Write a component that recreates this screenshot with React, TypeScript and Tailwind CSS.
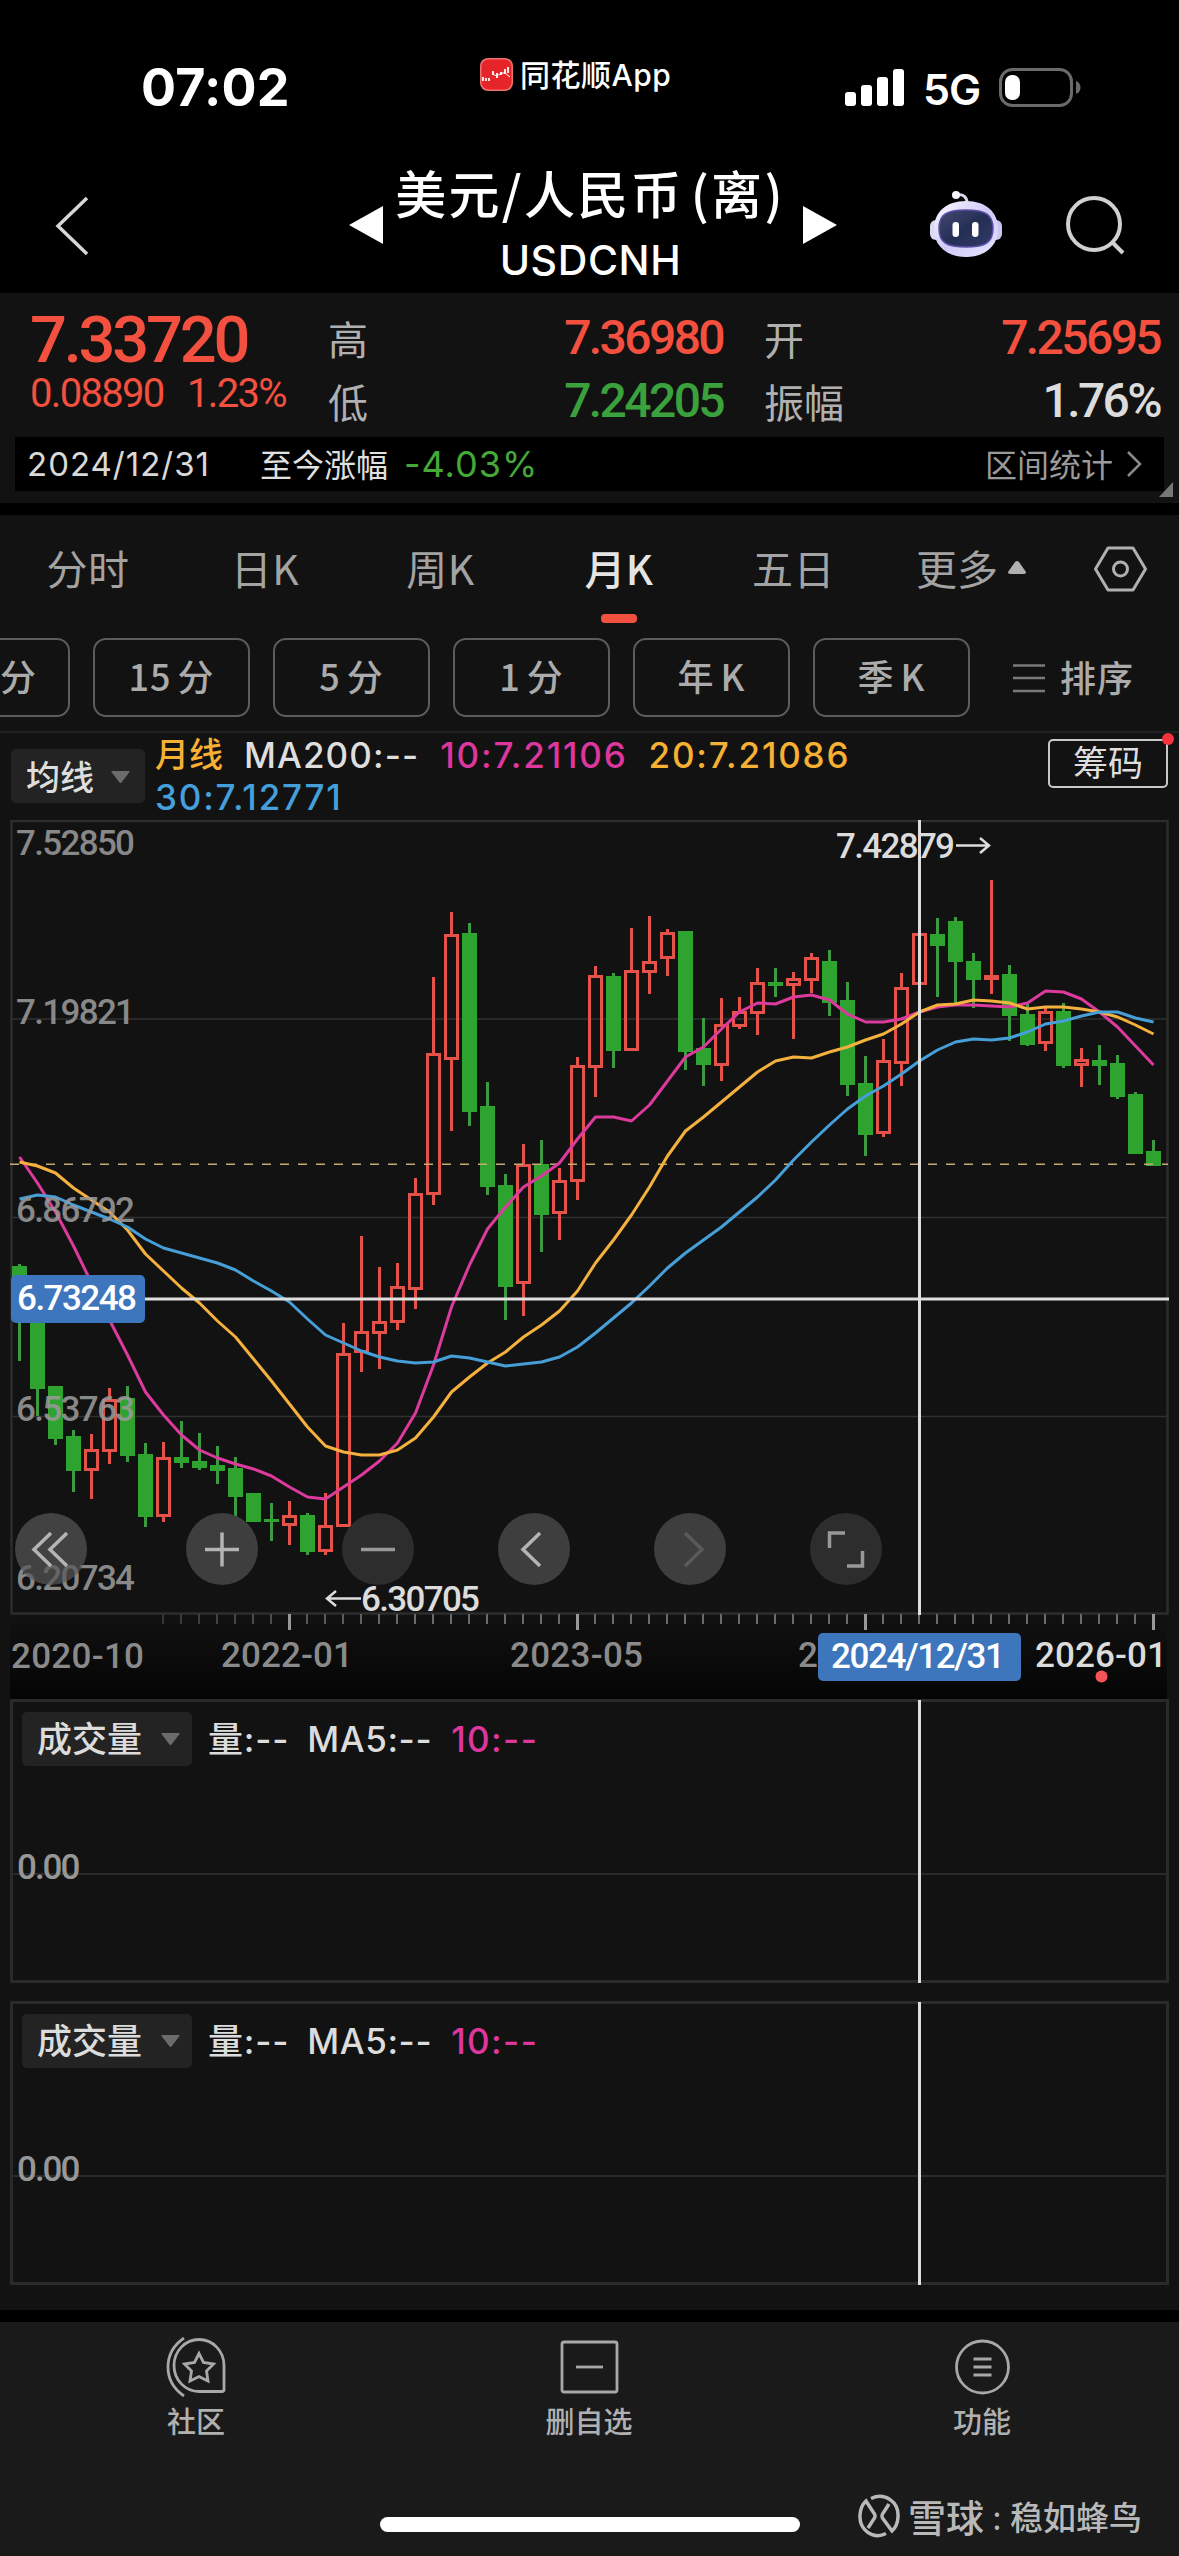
import React from 'react';
import { clsx } from 'clsx';

// --- Chart data ---

interface Candle {
    up: boolean;
    high: number;
    top: number;
    bottom: number;
    low: number;
}

// direction, high, body top, body bottom, low (in chart pixels)
const rawCandles: [number, number, number, number, number][] = [
    [0, 1264, 1266, 1300, 1361], [0, 1300, 1300, 1389, 1416], [0, 1386, 1386, 1439, 1445], [0, 1430, 1436, 1471, 1492],
    [1, 1434, 1449, 1471, 1499], [1, 1388, 1399, 1452, 1464], [0, 1386, 1398, 1456, 1462], [0, 1443, 1454, 1517, 1527],
    [1, 1442, 1457, 1517, 1522], [0, 1421, 1457, 1463, 1468], [0, 1433, 1461, 1468, 1470], [0, 1446, 1465, 1471, 1484],
    [0, 1457, 1468, 1497, 1518], [0, 1493, 1493, 1522, 1522], [0, 1503, 1519, 1522, 1541], [1, 1501, 1515, 1526, 1545],
    [0, 1513, 1515, 1552, 1555], [1, 1493, 1525, 1552, 1555], [1, 1323, 1353, 1527, 1527], [1, 1236, 1331, 1353, 1372],
    [1, 1267, 1321, 1334, 1369], [1, 1263, 1286, 1323, 1330], [1, 1178, 1193, 1290, 1309], [1, 977, 1053, 1195, 1205],
    [1, 912, 934, 1060, 1131], [0, 923, 933, 1112, 1126], [0, 1082, 1106, 1187, 1195], [0, 1174, 1185, 1287, 1320],
    [1, 1144, 1164, 1284, 1316], [0, 1140, 1164, 1215, 1252], [1, 1168, 1180, 1214, 1240], [1, 1057, 1065, 1182, 1200],
    [1, 966, 975, 1068, 1097], [0, 973, 976, 1051, 1068], [1, 928, 970, 1051, 1051], [1, 916, 961, 973, 994],
    [1, 929, 932, 959, 976], [0, 931, 931, 1052, 1070], [0, 1018, 1048, 1065, 1086], [1, 998, 1024, 1066, 1081],
    [1, 997, 1011, 1027, 1029], [1, 968, 982, 1014, 1035], [0, 968, 982, 986, 997], [1, 972, 978, 986, 1039],
    [1, 953, 957, 981, 993], [0, 950, 961, 1003, 1016], [0, 982, 1000, 1085, 1096], [0, 1056, 1083, 1135, 1156],
    [1, 1039, 1060, 1134, 1137], [1, 973, 987, 1064, 1086], [1, 915, 933, 985, 992], [0, 918, 934, 946, 997],
    [0, 917, 921, 962, 1004], [0, 953, 961, 980, 1008], [1, 880, 975, 980, 994], [0, 965, 974, 1016, 1041],
    [0, 1003, 1014, 1045, 1046], [1, 1008, 1011, 1044, 1051], [0, 1003, 1011, 1066, 1068], [1, 1048, 1059, 1066, 1087],
    [0, 1045, 1060, 1066, 1085], [0, 1055, 1063, 1097, 1099], [0, 1092, 1094, 1154, 1154], [0, 1140, 1151, 1166, 1166],
];

const candles: Candle[] = rawCandles.map(([dir, high, top, bottom, low]) => ({ up: dir === 1, high, top, bottom, low }));

const ma10 = [
    1157, 1183, 1212, 1246, 1283, 1320, 1355, 1392, 1415, 1435, 1450, 1458, 1464, 1469, 1476, 1487, 1497, 1499, 1487, 1475, 1461, 1443,
    1413, 1365, 1307, 1265, 1229, 1207, 1187, 1176, 1163, 1139, 1117, 1117, 1121, 1105, 1081, 1057, 1047, 1029, 1012, 1003, 1004, 997,
    995, 1000, 1014, 1022, 1022, 1019, 1012, 1007, 1005, 1005, 1006, 1007, 1003, 991, 992, 999, 1012, 1027, 1046, 1065,
];
const ma20 = [
    1162, 1166, 1173, 1188, 1200, 1212, 1230, 1254, 1271, 1288, 1303, 1321, 1337, 1359, 1381, 1404, 1427, 1446, 1452, 1455, 1455, 1450,
    1438, 1417, 1392, 1377, 1363, 1352, 1337, 1325, 1311, 1291, 1263, 1240, 1215, 1187, 1156, 1131, 1117, 1102, 1087, 1072, 1061, 1057,
    1058, 1052, 1047, 1040, 1034, 1024, 1012, 1005, 1004, 1000, 1001, 1003, 1009, 1007, 1007, 1009, 1012, 1017, 1025, 1034,
];
const ma30 = [
    1199, 1195, 1197, 1205, 1212, 1219, 1227, 1239, 1248, 1253, 1258, 1263, 1270, 1281, 1291, 1302, 1319, 1335, 1343, 1351, 1357, 1361,
    1363, 1362, 1356, 1358, 1362, 1366, 1364, 1362, 1357, 1347, 1333, 1318, 1303, 1286, 1268, 1253, 1240, 1227, 1212, 1197, 1180, 1160,
    1142, 1125, 1109, 1096, 1086, 1074, 1061, 1050, 1042, 1039, 1040, 1038, 1032, 1024, 1021, 1016, 1012, 1012, 1018, 1022,
];

const cx = (i: number) => 19.5 + i * 18;
const toPoints = (ys: number[]) => ys.map((y, i) => `${cx(i)},${y}`).join(' ');

// --- Icons ---

const Caret = ({ className }: { className?: string }) => (
    <svg className={clsx('h-3 w-[19px] fill-[#6b6b6b]', className)} viewBox="0 0 19 12">
        <path d="M1 0h17q1 0 .5 1L10.5 11.4q-1 1-2 0L.5 1Q0 0 1 0z" />
    </svg>
);

const AppLogo = () => (
    <svg className="h-[33px] w-[33px]" viewBox="0 0 33 33">
        <rect width="33" height="33" rx="8" fill="#f0706e" />
        <rect x="1.5" y="1.5" width="30" height="30" rx="7" fill="#e5252a" />
        <path d="M3 19v4M6 20v3M9 20v3M13 13v4M17 15v5M21 14v3M25 11v5M28 9v6" stroke="#fff" strokeWidth="1.8" />
        <path d="M12 16l5 2 4-3 4 0 5 4" fill="none" stroke="#fff" strokeWidth="1" />
    </svg>
);

const Robot = () => (
    <svg className="h-[70px] w-[74px]" viewBox="0 0 74 70">
        <defs>
            <linearGradient id="shell" x1="0" y1="0" x2="1" y2="1">
                <stop offset="0" stopColor="#fafaff" />
                <stop offset="0.5" stopColor="#d2c9f8" />
                <stop offset="1" stopColor="#e4e6ff" />
            </linearGradient>
            <linearGradient id="visor" x1="0" y1="0" x2="1" y2="1">
                <stop offset="0" stopColor="#444a72" />
                <stop offset="0.5" stopColor="#252f55" />
                <stop offset="1" stopColor="#303a66" />
            </linearGradient>
        </defs>
        <path d="M38 13c0-6-4-9-9-8" fill="none" stroke="#d5d6ea" strokeWidth="3" />
        <circle cx="27" cy="5" r="4" fill="#f4f4ff" />
        <rect x="1" y="30" width="12" height="20" rx="6" fill="#d9daf4" />
        <rect x="61" y="30" width="12" height="20" rx="6" fill="#c6c8ee" />
        <path d="M37 11c20 0 32 11 32 28S56 67 37 67 5 56 5 39s12-28 32-28z" fill="url(#shell)" />
        <path d="M37 20c20 0 27 5 27 18.500S57 57 37 57s-27-5-27-18.500S17 20 37 20z" fill="url(#visor)" stroke="#5a4fa6" strokeWidth="1.5" />
        <rect x="23.500" y="32" width="6.500" height="15" rx="3.200" fill="#fff" />
        <rect x="43" y="32" width="6.500" height="15" rx="3.200" fill="#fff" />
    </svg>
);

// --- Header ---

const StatusBar = () => (
    <div className="flex h-[150px] items-start font-['Inter','Noto_Sans_CJK_SC',sans-serif] text-white">
        <div className="w-[480px] pt-[62px] pl-[141px] text-[52px] leading-[52px] font-bold tracking-[0.2px]">07:02</div>
        <div className="flex w-[364px] items-center pt-[56px]">
            <AppLogo />
            <span className="mt-[1px] ml-[7px] text-[30px] leading-[36px] font-medium tracking-[0.5px]">同花顺App</span>
        </div>
        <svg className="mt-[69px] h-[38px] w-[60px] fill-white" viewBox="0 0 60 38">
            <rect x="1" y="23" width="11" height="14" rx="3" />
            <rect x="17" y="16" width="11" height="21" rx="3" />
            <rect x="33" y="8" width="11" height="29" rx="3" />
            <rect x="49" y="0" width="11" height="37" rx="3" />
        </svg>
        <span className="mt-[67px] ml-[19px] w-[58px] text-[43px] leading-[44px] font-semibold tracking-[-1px]">5G</span>
        <svg className="mt-[68px] ml-[18px] h-[40px] w-[84px]" viewBox="0 0 84 40">
            <rect x="1.5" y="1.5" width="71" height="36" rx="12" fill="none" stroke="#6a6a6a" strokeWidth="3" />
            <rect x="6" y="7" width="15" height="25" rx="7" fill="#fff" />
            <path d="M77 13c6 2 6 11 0 13z" fill="#6a6a6a" />
        </svg>
    </div>
);

const NavBar = () => (
    <div className="flex h-[143px] font-['Noto_Sans_CJK_SC',sans-serif] text-white">
        <svg className="mt-[46px] ml-[54px] h-[60px] w-[36px]" viewBox="0 0 36 60" fill="none" stroke="#d6d6d6" strokeWidth="3.5">
            <path d="M33 2L4 30l29 28" />
        </svg>
        <svg className="mt-[56px] ml-[259px] h-[38px] w-[34px] fill-white" viewBox="0 0 34 38">
            <path d="M0 19L34 0v38z" />
        </svg>
        <div className="flex w-[420px] flex-col items-center">
            <div className="mt-[12px] -ml-[6px] text-[51px] leading-[60px] font-medium whitespace-pre tracking-[2.3px]">
                美元/人民币 <span className="-ml-[7px]">(离)</span>
            </div>
            <div className="mt-[16px] -ml-[5px] font-['Inter',sans-serif] text-[41px] leading-[44px] font-medium tracking-[0.6px]">USDCNH</div>
        </div>
        <svg className="mt-[56px] h-[38px] w-[34px] fill-white" viewBox="0 0 34 38">
            <path d="M34 19L0 0v38z" />
        </svg>
        <div className="mt-[40px] ml-[92px]">
            <Robot />
        </div>
        <svg className="mt-[46px] ml-[62px] h-[60px] w-[62px]" viewBox="0 0 62 60" fill="none" stroke="#d0d0d0" strokeWidth="4">
            <circle cx="29" cy="28" r="26" />
            <path d="M47 46l11 11" />
        </svg>
    </div>
);

// --- Quote panel ---

const RED = 'text-[#f4503f]';
const GREEN = 'text-[#3ba13d]';

interface QuoteItemProps {
    label: string;
    value: string;
    color: string;
}

const QuoteItem: React.FC<QuoteItemProps> = ({ label, value, color }) => (
    <div className="flex h-[63px] items-center justify-between leading-[62px]">
        <span className="text-[40px] text-[#b0b0b0]">{label}</span>
        <span className={clsx("font-['Roboto',sans-serif] text-[48px] font-medium tracking-[-2.6px]", color)}>{value}</span>
    </div>
);

const QuotePanel = () => (
    <div className="h-[210px] bg-[#121212] font-['Noto_Sans_CJK_SC',sans-serif]">
        <div className="flex h-[144px] pt-[13px]">
            <div className={clsx("w-[328px] pl-[30px] font-['Roboto',sans-serif]", RED)}>
                <div className="pt-[1px] text-[65px] leading-[66px] font-medium tracking-[-3.2px]">7.33720</div>
                <div className="flex text-[40px] leading-[42px] tracking-[-1.7px] whitespace-pre">
                    <span className="w-[157px]">0.08890</span>
                    <span>1.23%</span>
                </div>
            </div>
            <div className="w-[395px]">
                <QuoteItem label="高" value="7.36980" color={RED} />
                <QuoteItem label="低" value="7.24205" color={GREEN} />
            </div>
            <div className="ml-[41px] w-[396px]">
                <QuoteItem label="开" value="7.25695" color={RED} />
                <QuoteItem label="振幅" value="1.76%" color="text-[#dcdcdc]" />
            </div>
        </div>
        <div className="relative ml-[15px] flex h-[54px] w-[1149px] items-center bg-black text-[32px] leading-[50px]">
            <span className="w-[245px] pl-[12px] font-['Inter',sans-serif] text-[33px] tracking-[1px] text-[#d8d8d8]">2024/12/31</span>
            <span className="-mt-[2px] text-[#e0e0e0]">至今涨幅</span>
            <span className="ml-[16px] flex-1 font-['Inter',sans-serif] text-[36px] tracking-[1px] text-[#45a838]">-4.03%</span>
            <span className="-mt-[2px] text-[#9a9a9a]">区间统计</span>
            <svg className="mr-[21px] ml-[13px] h-[28px] w-[17px]" viewBox="0 0 17 28" fill="none" stroke="#8a8a8a" strokeWidth="2.5">
                <path d="M2 2l12 12L2 26" />
            </svg>
            <svg className="absolute -right-[9px] -bottom-[6px] h-[15px] w-[14px] fill-[#777]" viewBox="0 0 14 15">
                <path d="M14 0v15H0z" />
            </svg>
        </div>
    </div>
);

// --- Period tabs ---

const tabs = [
    { label: '分时', width: 'w-[176px]' },
    { label: '日K', width: 'w-[178px]' },
    { label: '周K', width: 'w-[173px]' },
    { label: '月K', width: 'w-[184px]' },
    { label: '五日', width: 'w-[165px]' },
];

const PeriodTabs = () => (
    <div className="flex h-[122px] text-[41px] text-[#a3a3a3]">
        {tabs.map(({ label, width }) => (
            <div key={label} className={clsx('flex shrink-0 flex-col items-center pt-[22px]', width)}>
                <span className={clsx('leading-[60px] tracking-[0.5px]', label === '月K' ? 'font-medium text-[#e4e4e4]' : 'font-normal')}>{label}</span>
                {label === '月K' && <span className="mt-[17px] h-[9px] w-[36px] rounded-[4px] bg-[#f4503f]" />}
            </div>
        ))}
        <div className="ml-[40px] flex h-[104px] items-center leading-[60px]">
            更多
            <svg className="ml-[10px] h-[13px] w-[18px] fill-[#b0b0b0]" viewBox="0 0 18 13">
                <path d="M9 0q1 0 2 1l7 10q0 2-2 2H2q-2 0-2-2L7 1q1-1 2-1z" />
            </svg>
        </div>
        <svg className="mt-[31px] ml-[68px] h-[46px] w-[54px]" viewBox="0 0 54 46" fill="none" stroke="#b0b0b0" strokeWidth="3">
            <path d="M14 2h25l12.500 21L39 44H14L1.500 23z" strokeLinejoin="round" />
            <circle cx="26.500" cy="23" r="7" />
        </svg>
    </div>
);

const chips = ['15 分', '5 分', '1 分', '年 K', '季 K'];

const ChipRow = () => (
    <div className="flex h-[95px] items-start border-b-[2px] border-[#202020] text-[36px] text-[#ababab]">
        <div className="flex h-[79px] w-[70px] items-center rounded-r-[13px] border-y-2 border-r-2 border-[#5c5c5c] pb-[5px] font-medium">分</div>
        {chips.map((chip) => (
            <div
                key={chip}
                className="ml-[23px] flex h-[79px] w-[157px] items-center justify-center rounded-[13px] border-2 border-[#5c5c5c] pb-[5px] font-medium tracking-[1px] [word-spacing:-3px]"
            >
                {chip}
            </div>
        ))}
        <div className="ml-[43px] flex h-[79px] items-center">
            <svg className="h-[30px] w-[32px]" viewBox="0 0 32 30" stroke="#7a7a7a" strokeWidth="2.500">
                <path d="M0 2.500h32M0 15h32M0 28h32" />
            </svg>
            <span className="ml-[15px] pb-[4px] font-medium tracking-[1px]">排序</span>
        </div>
    </div>
);

// --- Main chart ---

const MaLegend = () => (
    <div className="flex h-[87px] items-start pl-[11px]">
        <button className="mt-[16px] flex h-[54px] w-[134px] items-center rounded-[5px] bg-[#232323] pb-[2px] pl-[15px] text-[34px] font-medium text-[#dedede]">
            均线
            <Caret className="mt-[3px] ml-[17px]" />
        </button>
        <div className="ml-[10px] flex w-[893px] flex-wrap gap-x-[21px] pt-[1px] font-['Inter','Noto_Sans_CJK_SC',sans-serif] text-[35px] leading-[42px] font-medium tracking-[1.8px]">
            <span className="text-[34px] tracking-normal text-[#f6b033]">月线</span>
            <span className="tracking-[1.1px] text-[#dedede]">MA200:--</span>
            <span className="text-[#dd379e]">10:7.21106</span>
            <span className="w-[300px] text-[#f6b033]">20:7.21086</span>
            <span className="text-[#459fdb]">30:7.12771</span>
        </div>
        <div className="relative mt-[6px] flex h-[49px] w-[120px] items-center justify-center rounded-[5px] border-2 border-[#c8c8c8] pb-[5px] text-[35px] text-[#dedede]">
            筹码
            <span className="absolute -top-[8px] -right-[8px] h-3 w-3 rounded-full bg-[#f5333c]" />
        </div>
    </div>
);

const CandleStick = ({ candle, index }: { candle: Candle; index: number }) => {
    const x = cx(index);
    const { up, high, top, bottom, low } = candle;
    if (up) {
        return (
            <g fill="none" stroke="#e4524a" strokeWidth="3">
                <path d={`M${x} ${high}V${top}M${x} ${bottom}V${low}`} />
                <rect x={x - 6} y={top + 1.5} width="12" height={bottom - top - 3} />
            </g>
        );
    }
    return (
        <g fill="#2fa32f">
            <rect x={x - 1.5} y={high} width="3" height={low - high} fill="#3c9a40" />
            <rect x={x - 7.5} y={top} width="15" height={bottom - top} />
        </g>
    );
};

const priceLabels = [
    { text: '7.52850', y: 855 },
    { text: '7.19821', y: 1023.5 },
    { text: '6.86792', y: 1222 },
    { text: '6.53763', y: 1421 },
    { text: '6.20734', y: 1589.5 },
];

const KLineChart = () => (
    <svg
        className="block h-[879px] w-[1179px] font-['Roboto',sans-serif] text-[35px] font-medium"
        viewBox="0 820 1179 879"
    >
        <defs>
            <linearGradient id="axis" x1="0" y1="0" x2="0" y2="1">
                <stop offset="0" stopColor="#121212" />
                <stop offset="1" stopColor="#040404" />
            </linearGradient>
            <linearGradient id="fade" gradientUnits="userSpaceOnUse" x1="150" y1="0" x2="400" y2="0">
                <stop offset="0" stopColor="#333" />
                <stop offset="1" stopColor="#6a6a6a" />
            </linearGradient>
        </defs>
        <rect x="10" y="1614" width="1157" height="86" fill="url(#axis)" />
        <path d="M12 1019H1167M12 1217.500H1167M12 1416.500H1167" stroke="#303030" strokeWidth="1.500" />
        <rect x="11.500" y="821" width="1156" height="792.500" fill="none" stroke="#2d2d2d" strokeWidth="2.500" />

        {candles.map((candle, i) => (
            <CandleStick key={i} candle={candle} index={i} />
        ))}
        <path d="M10 1164.300H1168" stroke="#c4a974" strokeWidth="1.500" strokeDasharray="9 9" />

        <g fill="none" strokeWidth="3" strokeLinejoin="round">
            <polyline points={toPoints(ma10)} stroke="#dc3a9c" />
            <polyline points={toPoints(ma20)} stroke="#f5b13d" />
            <polyline points={toPoints(ma30)} stroke="#479fd8" />
        </g>

        <g fill="#999" fillOpacity="0.88">
            {priceLabels.map(({ text, y }) => (
                <text key={text} x="16" y={y} textLength="119">{text}</text>
            ))}
        </g>

        {/* time scale */}
        {candles.map((_, i) => i >= 8 && (
            <rect key={i} x={cx(i) - 1.5} y="1614" width={i % 16 === 15 ? 3 : 2} height={i % 16 === 15 ? 16 : 10} fill={i % 16 === 15 ? '#999' : 'url(#fade)'} />
        ))}
        <g fill="#8a8a8a">
            <text x="11" y="1668" textLength="133">2020-10</text>
            <text x="221" y="1667" textLength="132">2022-01</text>
            <text x="510" y="1667" textLength="133">2023-05</text>
            <text x="798" y="1667">2</text>
        </g>
        <text x="1035" y="1667" textLength="132" fill="#dcdcdc">2026-01</text>
        <circle cx="1101.500" cy="1676.500" r="6" fill="#f5525a" />

        {/* high / low markers */}
        <g fill="#dcdcdc">
            <text x="836" y="858" textLength="119">7.42879</text>
            <text x="361" y="1611" textLength="119">6.30705</text>
        </g>
        <path d="M956 845.500h33m-9-7.500l9 7.500-9 7.500M361 1598.500h-34m9-7.500l-9 7.500 9 7.500" fill="none" stroke="#dcdcdc" strokeWidth="2.500" />

        {/* crosshair */}
        <path d="M145 1299H1169M919.500 820V1615" stroke="#dedede" strokeWidth="3" />
        <rect x="11" y="1275" width="134" height="48" rx="5" fill="#3e76bd" />
        <text x="17" y="1310" textLength="120" fill="#fff">6.73248</text>
        <rect x="818" y="1633" width="203" height="48" rx="5" fill="#3e76bd" />
        <text x="831" y="1668" textLength="174" fill="#fff">2024/12/31</text>
    </svg>
);

const ROUND = 'flex h-[72px] w-[72px] items-center justify-center rounded-full';

const ChartControls = () => (
    <div className="absolute top-[693px] left-[15px] flex">
        {[
            { key: 'fold', tone: 'bg-[#575757]/70', gap: 'mr-[99px]', line: '#b4b4b4', d: 'M36 20L19 36.5 36 53M52 20L35 36.5 52 53' },
            { key: 'in', tone: 'bg-[#3e3e3e]', gap: 'mr-[84px]', line: '#b4b4b4', d: 'M19 36.5H53M36 19.5V53.5' },
            { key: 'out', tone: 'bg-[#2d2d2d]', gap: 'mr-[84px]', line: '#999', d: 'M19 36.5H53' },
            { key: 'prev', tone: 'bg-[#3e3e3e]', gap: 'mr-[84px]', line: '#b4b4b4', d: 'M42 20L25 36.5 42 53' },
            { key: 'next', tone: 'bg-[#3e3e3e]', gap: 'mr-[84px]', line: '#5a5a5a', d: 'M31 20L48 36.5 31 53' },
            { key: 'full', tone: 'bg-[#2d2d2d]', gap: '', line: '#999', d: 'M35 20H19.5V35M37 53H52.5V38' },
        ].map(({ key, tone, gap, line, d }) => (
            <button key={key} className={clsx(ROUND, tone, gap)}>
                <svg className="h-[72px] w-[72px]" viewBox="0 0 72 72" fill="none" stroke={line} strokeWidth="3.500">
                    <path d={d} />
                </svg>
            </button>
        ))}
    </div>
);

// --- Volume panels ---

const VolumePanel = () => (
    <div className="relative mr-[10px] ml-[10px] h-[284px] border-[3px] border-[#2a2a2a] pt-[10px] pl-[9px]">
        <div className="flex items-center font-['Inter','Noto_Sans_CJK_SC',sans-serif] text-[35px] leading-[54px] text-[#dcdcdc]">
            <button className="flex h-[54px] w-[170px] items-center rounded-[5px] bg-[#232323] pl-[15px] font-medium">
                成交量
                <Caret className="ml-[19px]" />
            </button>
            <span className="ml-[16px] font-medium tracking-[0.8px]">量:--</span>
            <span className="ml-[18px] font-medium tracking-[0.6px]">MA5:--</span>
            <span className="ml-[19px] font-medium tracking-[1.4px] text-[#dd379e]">10:--</span>
        </div>
        <div className="-ml-[9px] flex h-[109px] items-end border-b-2 border-[#2a2a2a] pl-[4px]">
            <span className="-mb-[12px] font-['Roboto',sans-serif] text-[35px] leading-[35px] font-medium tracking-[-2px] text-[#979797]">0.00</span>
        </div>
        <span className="absolute -top-[2px] -bottom-[3px] left-[905px] w-[3px] bg-[#dedede]" />
    </div>
);

// --- Bottom bar ---

const bottomItems = [
    {
        label: '社区',
        icon: (
            <>
                <path d="M52 54.500H29a25 26 0 1 1 25-26V52.500q0 2-2 2z" transform="translate(4 0)" />
                <path d="M18 1Q2 12 2 30t16 29" />
                <path d="M33 16.500l4.500 9 10 1.500-7 7 1.500 10-9-4.500-9 4.500 1.500-10-7-7 10-1.500z" />
            </>
        ),
    },
    {
        label: '删自选',
        icon: (
            <>
                <rect x="3" y="5" width="55" height="50" rx="2" />
                <path d="M17 30h27" />
            </>
        ),
    },
    {
        label: '功能',
        icon: (
            <>
                <circle cx="30.500" cy="30" r="26" />
                <path d="M21.500 22h18M21.500 30h18M21.500 38h18" />
            </>
        ),
    },
];

const BottomBar = () => (
    <div className="relative h-[234px] bg-[#1a1a1a]">
        <div className="flex justify-around pt-[15px]">
            {bottomItems.map(({ label, icon }) => (
                <div key={label} className="flex w-[393px] flex-col items-center">
                    <svg className="h-[60px] w-[61px]" viewBox="0 0 61 60" fill="none" stroke="#a8a8a8" strokeWidth="2.800">
                        {icon}
                    </svg>
                    <span className="mt-[3px] -ml-[1px] text-[29px] leading-[40px] font-medium text-[#b0b0b0]">{label}</span>
                </div>
            ))}
        </div>
        <div className="mx-auto mt-[77px] h-[15px] w-[420px] rounded-full bg-white" />
        <div className="absolute right-[37px] bottom-[18px] flex items-center text-[#b9b9b9]">
            <svg className="h-[44px] w-[44px]" viewBox="0 0 44 44" fill="none" stroke="#b9b9b9" strokeWidth="3.500">
                <path d="M14 4.500C28-2 42 8 41 23q-.5 9-6 14L25.500 24q-1-2 0-4L32 10" />
                <path d="M29 39.500C16 46 2 36 3 21q.5-9 6-14l8.500 13q1 2 0 4L11 34" />
            </svg>
            <span className="ml-[7px] text-[38px] leading-[44px] font-medium">雪球</span>
            <span className="mx-[6px] w-[14px] text-center text-[32px] leading-[44px]">:</span>
            <span className="text-[33px] leading-[44px] font-medium">稳如蜂鸟</span>
        </div>
    </div>
);

export default function App() {
    return (
        <div className="h-[2556px] w-[1179px] overflow-hidden bg-black font-['Noto_Sans_CJK_SC',sans-serif]">
            <StatusBar />
            <NavBar />
            <QuotePanel />
            <div className="mt-[12px] h-[1795px] bg-[#121212]">
                <PeriodTabs />
                <div className="h-[1px]" />
                <ChipRow />
                <MaLegend />
                <div className="relative">
                    <KLineChart />
                    <ChartControls />
                </div>
                <VolumePanel />
                <div className="h-[18px]" />
                <VolumePanel />
            </div>
            <div className="h-3 bg-black" />
            <BottomBar />
        </div>
    );
}
